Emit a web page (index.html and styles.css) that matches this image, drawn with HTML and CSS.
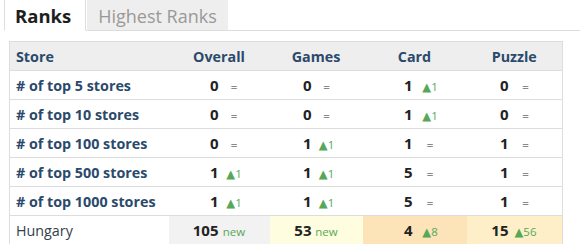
FILE: index.html
```html
<!DOCTYPE html>
<html>
<head>
<meta charset="utf-8">
<link rel="stylesheet" href="styles.css">
</head>
<body>
<div class="page">
  <ul class="tabs">
    <li class="tab active">Ranks</li>
    <li class="tab">Highest Ranks</li>
  </ul>
  <table class="ranks">
    <colgroup>
      <col class="w-store"><col class="w-ov"><col class="w-ga"><col class="w-ca"><col class="w-pu">
    </colgroup>
    <thead>
      <tr>
        <th class="label">Store</th>
        <th>Overall</th>
        <th>Games</th>
        <th>Card</th>
        <th>Puzzle</th>
      </tr>
    </thead>
    <tbody>
      <tr>
        <td class="label">&#35; of top 5 stores</td>
        <td class="ov"><div class="v"><b>0</b><span class="eq">=</span></div></td>
        <td class="ga"><div class="v"><b>0</b><span class="eq">=</span></div></td>
        <td class="ca"><div class="v"><b>1</b><span class="up">&#9650;1</span></div></td>
        <td class="pu"><div class="v"><b>0</b><span class="eq">=</span></div></td>
      </tr>
      <tr>
        <td class="label">&#35; of top 10 stores</td>
        <td class="ov"><div class="v"><b>0</b><span class="eq">=</span></div></td>
        <td class="ga"><div class="v"><b>0</b><span class="eq">=</span></div></td>
        <td class="ca"><div class="v"><b>1</b><span class="up">&#9650;1</span></div></td>
        <td class="pu"><div class="v"><b>0</b><span class="eq">=</span></div></td>
      </tr>
      <tr>
        <td class="label">&#35; of top 100 stores</td>
        <td class="ov"><div class="v"><b>0</b><span class="eq">=</span></div></td>
        <td class="ga"><div class="v"><b>1</b><span class="up">&#9650;1</span></div></td>
        <td class="ca"><div class="v"><b>1</b><span class="eq">=</span></div></td>
        <td class="pu"><div class="v"><b>1</b><span class="eq">=</span></div></td>
      </tr>
      <tr>
        <td class="label">&#35; of top 500 stores</td>
        <td class="ov"><div class="v"><b>1</b><span class="up">&#9650;1</span></div></td>
        <td class="ga"><div class="v"><b>1</b><span class="up">&#9650;1</span></div></td>
        <td class="ca"><div class="v"><b>5</b><span class="eq">=</span></div></td>
        <td class="pu"><div class="v"><b>1</b><span class="eq">=</span></div></td>
      </tr>
      <tr>
        <td class="label">&#35; of top 1000 stores</td>
        <td class="ov"><div class="v"><b>1</b><span class="up">&#9650;1</span></div></td>
        <td class="ga"><div class="v"><b>1</b><span class="up">&#9650;1</span></div></td>
        <td class="ca"><div class="v"><b>5</b><span class="eq">=</span></div></td>
        <td class="pu"><div class="v"><b>1</b><span class="eq">=</span></div></td>
      </tr>
      <tr class="country">
        <td class="label plain">Hungary</td>
        <td class="ov bg-gray"><div class="v"><b>105</b><span class="new">new</span></div></td>
        <td class="ga bg-yellow"><div class="v"><b>53</b><span class="new">new</span></div></td>
        <td class="ca bg-peach"><div class="v"><b>4</b><span class="up">&#9650;8</span></div></td>
        <td class="pu bg-light"><div class="v"><b>15</b><span class="up">&#9650;56</span></div></td>
      </tr>
    </tbody>
  </table>
</div>
</body>
</html>
```

FILE: styles.css
```css
* { box-sizing: border-box; }
html, body { margin: 0; padding: 0; background: #fff; }
body { font-family: "Open Sans", "DejaVu Sans", sans-serif; color: #333; }

.page { padding: 0 0 0 4px; }

.tabs {
  list-style: none;
  margin: 0;
  padding: 0;
  display: flex;
  height: 31px;
  border-bottom: 1px solid #ddd;
}
.tab {
  height: 31px;
  margin-bottom: -1px;
  padding: 0 10px;
  display: flex;
  align-items: center;
  font-size: 18px;
  color: #999;
  background: #eee;
  border: 1px solid #eee;
  border-bottom-color: #ddd;
  margin-right: 1px;
}
.tab.active {
  font-weight: 700;
  color: #1e1e1e;
  background: #fff;
  border-color: #ddd;
  border-top: none;
  border-bottom-color: #fff;
  padding: 0 14px 0 10px;
  font-size: 18.5px;
}

.ranks {
  margin: 10px 0 0 5px;
  width: 554px;
  border-collapse: collapse;
  table-layout: fixed;
  border: 1px solid #ddd;
  font-size: 14.3px;
}
.w-store { width: 159px; }
.w-ov { width: 101px; }
.w-ga { width: 93px; }
.w-ca { width: 104px; }
.w-pu { width: 96px; }

.ranks th {
  height: 29px;
  padding: 0;
  background: #eee;
  color: #2b4a6b;
  font-weight: 700;
  text-align: center;
  border-bottom: 1px solid #ddd;
}
.ranks td {
  height: 29px;
  padding: 0;
  border-bottom: 1px solid #ddd;
}
.ranks .label {
  text-align: left;
  padding-left: 6px;
  color: #2b4a6b;
  font-weight: 700;
}
.ranks td.plain { font-weight: 400; color: #34404c; }

.v { display: grid; align-items: baseline; }
.ov .v { grid-template-columns: 50px 31px; }
.ga .v { grid-template-columns: 42px 30px; }
.ca .v { grid-template-columns: 50px 35px; }
.pu .v { grid-template-columns: 42px 34px; }

.v b { text-align: right; font-weight: 700; color: #222; font-size: 15px; }
.v span { text-align: center; font-size: 11.5px; }
.eq { color: #888; font-weight: 600; }
.up { color: #56a857; }
.new { color: #56a857; }

.bg-gray { background: #f2f2f2; }
.bg-yellow { background: #fefde0; }
.bg-peach { background: #fde3b8; }
.bg-light { background: #feefc9; }
```
